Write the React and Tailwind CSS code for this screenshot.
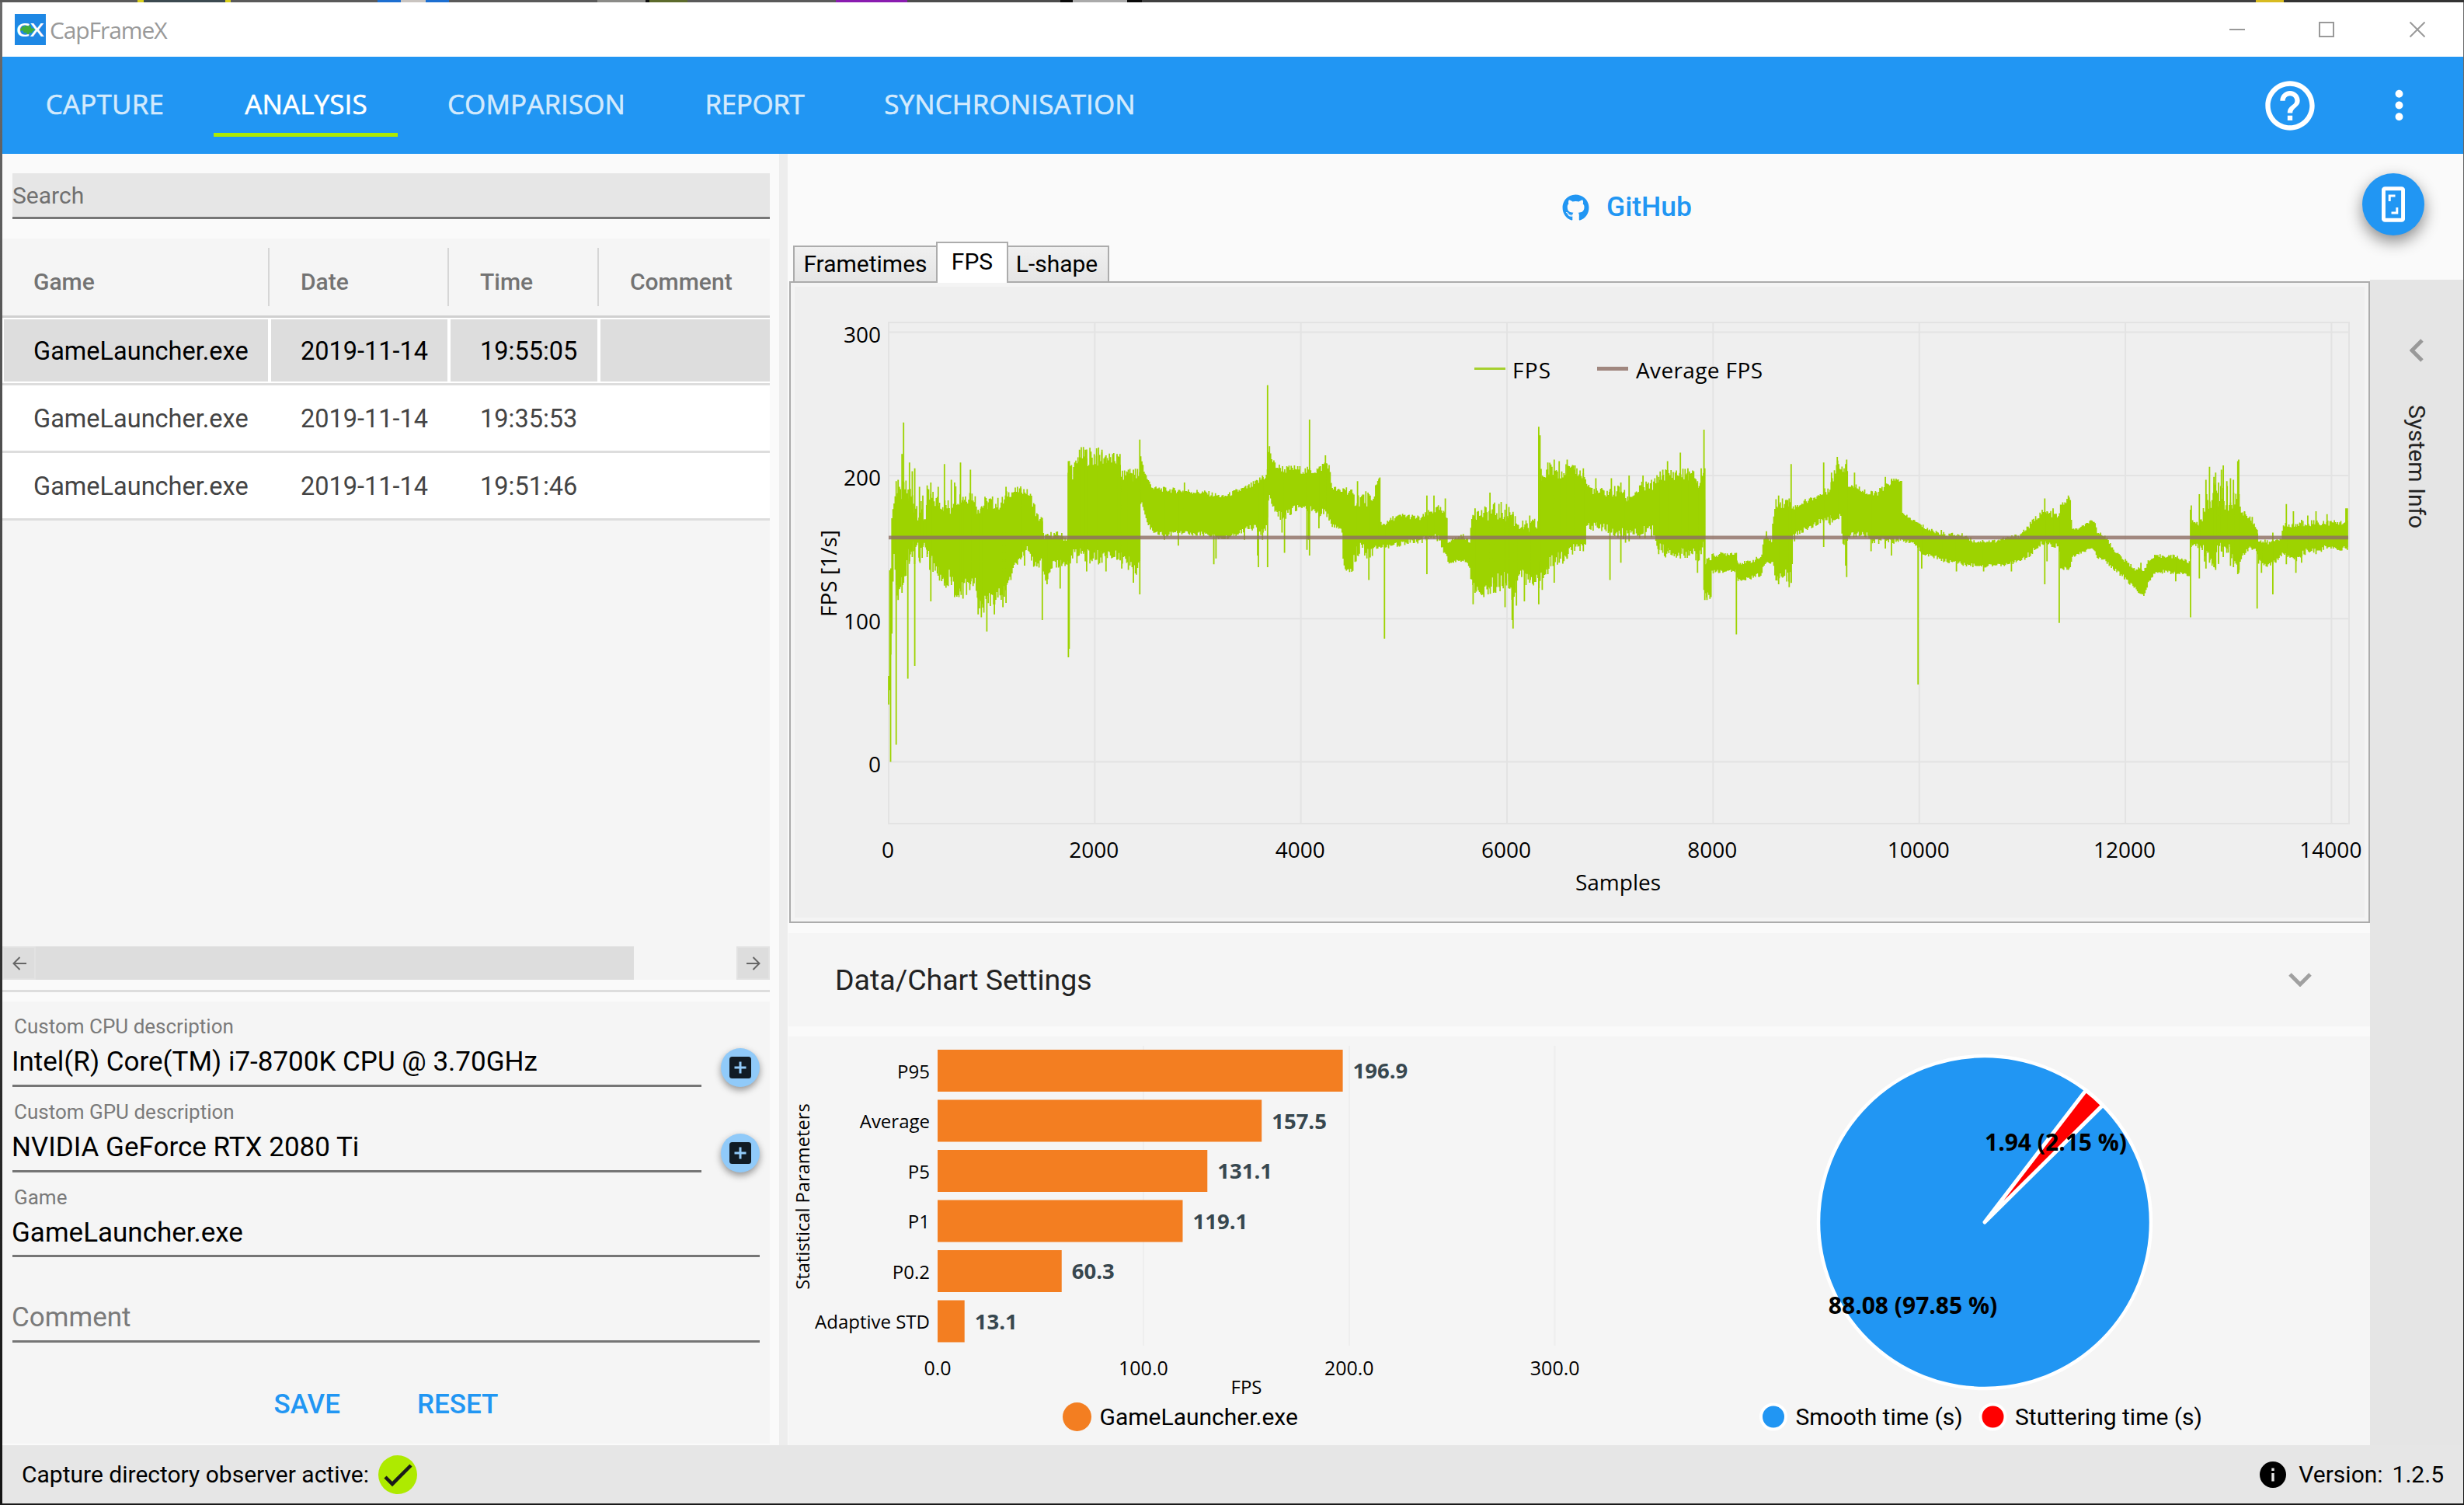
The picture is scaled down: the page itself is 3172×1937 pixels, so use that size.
import { FaGithub } from 'react-icons/fa'
import { MdHelpOutline, MdMoreVert } from 'react-icons/md'

const NAV = [
  { label: 'CAPTURE', box: 'w-[231px]', text: 'tracking-[0.2px]' },
  { label: 'ANALYSIS', box: 'w-[237px]', text: 'tracking-[0.1px]', active: true },
  { label: 'COMPARISON', box: 'w-[306px]', text: 'tracking-[0.1px]' },
  { label: 'REPORT', box: 'w-[206px]', text: 'tracking-[-0.4px]' },
  { label: 'SYNCHRONISATION', box: 'w-[401px]', text: 'tracking-[0.1px]' },
]

const RECORDS = [
  { game: 'GameLauncher.exe', date: '2019-11-14', time: '19:55:05', selected: true },
  { game: 'GameLauncher.exe', date: '2019-11-14', time: '19:35:53' },
  { game: 'GameLauncher.exe', date: '2019-11-14', time: '19:51:46' },
]

const STATS = [
  ['P95', 196.9],
  ['Average', 157.5],
  ['P5', 131.1],
  ['P1', 119.1],
  ['P0.2', 60.3],
  ['Adaptive STD', 13.1],
]

// what shows of the desktop above the window: [width, colour]
const DESKTOP = [
  [177, '#5a5a5a'], [8, '#d9cf1c'], [105, '#3c4a50'], [7, '#d9cf1c'], [189, '#5a5a5a'],
  [30, '#1d6fd1'], [32, '#c9c4c0'], [30, '#1d6fd1'], [191, '#5a5a5a'], [62, '#8b8b88'], [5, '#111'],
  [49, '#5d6b2c'], [191, '#5a5a5a'], [92, '#8a1bb0'], [197, '#4d4d4d'], [16, '#0a0a0a'],
  [70, '#aaa'], [19, '#0a0a0a'], [1434, '#404040'], [36, '#d8bb20'], [232, '#333'],
]

// envelope of the frame rate: [sample, high, low, noise]
const BAND = [
  [0, 60, 40, 0], [6, 130, 38, 4], [28, 140, 92, 4], [32, 174, 92, 6], [50, 180, 150, 8],
  [80, 190, 115, 10], [110, 185, 125, 14], [150, 192, 130, 12], [200, 186, 145, 22],
  [260, 180, 145, 18], [300, 176, 146, 18], [350, 170, 152, 12], [380, 184, 142, 16],
  [460, 182, 134, 12], [520, 180, 125, 10], [600, 177, 128, 14], [640, 188, 122, 16],
  [720, 184, 121, 14], [780, 187, 124, 12], [840, 184, 126, 6], [856, 176, 114, 7],
  [910, 179, 109, 12], [960, 181, 112, 12], [1060, 180, 116, 10], [1120, 182, 119, 9],
  [1150, 187, 124, 6], [1230, 189, 137, 6], [1290, 190, 144, 5], [1350, 188, 150, 5],
  [1400, 182, 140, 9], [1440, 171, 136, 7], [1492, 169, 142, 5], [1498, 158, 132, 5],
  [1540, 157, 126, 5], [1590, 159, 138, 5], [1650, 158, 138, 6], [1738, 156, 138, 6],
  [1744, 209, 142, 8], [1800, 202, 146, 16], [1850, 214, 145, 12], [2000, 213, 143, 16],
  [2120, 212, 144, 10], [2240, 210, 143, 10], [2262, 199, 142, 8], [2330, 203, 142, 8],
  [2438, 198, 136, 18], [2446, 214, 182, 4], [2480, 203, 175, 4], [2520, 196, 166, 4],
  [2570, 191, 160, 3], [2700, 190, 159, 4], [2900, 189, 160, 4], [3060, 188, 159, 4],
  [3250, 185, 156, 3], [3380, 189, 159, 4], [3460, 191, 163, 4], [3560, 194, 164, 6],
  [3640, 199, 160, 6], [3672, 200, 168, 4], [3690, 222, 187, 2], [3722, 210, 180, 4],
  [3770, 206, 172, 6], [3850, 204, 172, 6], [3940, 205, 177, 5], [4050, 203, 178, 6],
  [4180, 204, 172, 7], [4240, 209, 176, 6], [4275, 206, 169, 4], [4300, 192, 165, 4],
  [4400, 188, 161, 4], [4408, 192, 140, 6], [4480, 188, 131, 7], [4520, 183, 141, 10],
  [4600, 184, 154, 12], [4650, 184, 144, 12], [4690, 179, 147, 8], [4725, 192, 149, 6],
  [4768, 198, 152, 4], [4778, 166, 151, 3], [4820, 166, 150, 2], [4890, 170, 151, 4],
  [5000, 172, 153, 4], [5160, 170, 154, 4], [5250, 174, 158, 5], [5340, 177, 156, 5],
  [5422, 170, 142, 6], [5428, 154, 139, 3], [5580, 158, 141, 3], [5645, 152, 136, 3],
  [5652, 174, 124, 10], [5740, 173, 118, 8], [5900, 175, 125, 14], [6000, 174, 126, 14],
  [6060, 171, 116, 16], [6110, 166, 132, 8], [6200, 163, 128, 11], [6300, 166, 128, 12],
  [6306, 212, 122, 4], [6336, 198, 132, 12], [6400, 204, 139, 12], [6530, 203, 142, 11],
  [6600, 204, 147, 8], [6680, 203, 150, 7], [6760, 199, 150, 6], [6768, 194, 165, 3],
  [6860, 188, 164, 7], [7000, 188, 163, 8], [7120, 190, 159, 10], [7160, 183, 160, 4],
  [7300, 191, 160, 9], [7440, 194, 161, 9], [7458, 198, 150, 8], [7540, 201, 147, 9],
  [7700, 201, 146, 9], [7820, 200, 146, 8], [7860, 192, 142, 10], [7914, 205, 152, 6],
  [7922, 140, 116, 6], [7984, 143, 116, 6], [7990, 144, 133, 3], [8080, 145, 133, 3],
  [8220, 146, 134, 3], [8236, 139, 127, 2], [8330, 139, 128, 3], [8470, 143, 131, 3],
  [8486, 153, 137, 3], [8517, 158, 139, 3], [8570, 154, 140, 3], [8580, 168, 138, 4],
  [8612, 181, 129, 7], [8690, 181, 131, 9], [8764, 181, 128, 9], [8772, 177, 158, 3],
  [8900, 182, 163, 4], [9060, 187, 169, 4], [9110, 190, 168, 7], [9170, 198, 171, 9],
  [9205, 210, 171, 4], [9236, 206, 172, 7], [9250, 206, 158, 9], [9300, 206, 152, 10],
  [9314, 193, 158, 4], [9440, 191, 159, 5], [9500, 187, 158, 4], [9560, 187, 153, 5],
  [9640, 190, 154, 5], [9730, 196, 154, 5], [9828, 197, 156, 3], [9834, 173, 155, 3],
  [9960, 168, 152, 2], [10020, 165, 146, 3], [10100, 162, 144, 3], [10230, 159, 141, 3],
  [10450, 158, 138, 3], [10530, 154, 137, 3], [10720, 154, 137, 3], [10830, 156, 138, 3],
  [10970, 158, 140, 3], [11070, 165, 145, 4], [11180, 174, 152, 5], [11300, 173, 151, 5],
  [11360, 171, 151, 3], [11366, 179, 134, 3], [11470, 184, 136, 3], [11480, 162, 143, 2],
  [11560, 163, 146, 2], [11660, 168, 149, 2], [11710, 166, 146, 3], [11730, 160, 143, 2],
  [11800, 158, 141, 2], [11880, 149, 135, 3], [11970, 142, 130, 3], [12090, 135, 122, 3],
  [12184, 134, 115, 2], [12215, 139, 124, 3], [12280, 143, 131, 3], [12390, 144, 133, 3],
  [12500, 143, 132, 3], [12626, 139, 130, 2], [12636, 168, 152, 4], [12740, 167, 151, 6],
  [12780, 180, 142, 14], [12870, 188, 142, 16], [12960, 184, 147, 20], [13050, 182, 144, 16],
  [13105, 188, 136, 8], [13116, 175, 142, 3], [13200, 171, 149, 4], [13280, 163, 148, 3],
  [13288, 154, 140, 3], [13400, 153, 137, 4], [13520, 157, 144, 3], [13530, 164, 147, 5],
  [13600, 165, 144, 5], [13680, 165, 142, 6], [13760, 167, 147, 5], [13900, 167, 149, 5],
  [14100, 167, 149, 3], [14163, 168, 149, 3],
]

// single frames that leave the band: [sample, high, low]
const SPIKES = [
  [19, 130, 0], [73, 196, 12], [92, 197, 113], [130, 215, 118], [145, 237, 125], [186, 184, 58],
  [202, 209, 140], [229, 203, 143], [253, 205, 67], [299, 192, 140], [332, 186, 150], [374, 193, 143],
  [409, 195, 112], [481, 192, 130], [541, 208, 123], [608, 197, 126], [640, 195, 115], [697, 209, 119],
  [721, 185, 114], [794, 204, 124], [868, 176, 103], [899, 178, 101], [953, 182, 91], [1026, 177, 103],
  [1109, 179, 108], [1139, 192, 111], [1284, 191, 144], [1319, 188, 137], [1491, 168, 99], [1537, 156, 124],
  [1664, 158, 121], [1744, 210, 73], [1752, 207, 79], [1852, 218, 146], [1908, 218, 140], [1921, 212, 133],
  [2018, 219, 141], [2070, 218, 139], [2109, 214, 133], [2216, 215, 141], [2245, 215, 141], [2262, 199, 135],
  [2326, 204, 134], [2375, 204, 125], [2437, 225, 117], [2676, 190, 155], [2811, 189, 151], [2870, 195, 160],
  [3155, 185, 138], [3176, 185, 142], [3453, 189, 155], [3580, 193, 144], [3588, 193, 136], [3628, 200, 155],
  [3677, 263, 136], [3817, 203, 160], [3841, 203, 146], [4059, 202, 148], [4075, 202, 155], [4084, 239, 144],
  [4175, 205, 163], [4238, 214, 176], [4550, 196, 144], [4660, 187, 127], [4760, 198, 152], [4811, 166, 86],
  [5223, 186, 131], [5291, 186, 156], [5401, 184, 146], [5671, 171, 110], [5690, 177, 118], [5835, 188, 121],
  [5870, 180, 118], [5981, 176, 108], [6019, 178, 126], [6050, 173, 99], [6059, 173, 93], [6092, 166, 109],
  [6169, 164, 112], [6221, 172, 125], [6308, 234, 110], [6320, 228, 140], [6342, 200, 120], [6396, 209, 131],
  [6458, 211, 125], [6506, 210, 139], [6584, 211, 142], [6660, 207, 152], [6741, 205, 147], [6862, 198, 165],
  [6999, 190, 127], [7013, 198, 160], [7105, 195, 139], [7150, 183, 153], [7185, 200, 154], [7320, 200, 160],
  [7472, 199, 145], [7512, 204, 146], [7558, 210, 147], [7682, 216, 142], [7755, 205, 144], [7849, 196, 132],
  [7884, 205, 145], [7911, 232, 120], [7920, 205, 113], [7940, 142, 113], [8226, 146, 89], [8517, 161, 139],
  [8636, 186, 124], [8738, 184, 122], [8757, 208, 125], [8790, 175, 154], [9073, 209, 150], [9149, 202, 170],
  [9205, 213, 171], [9296, 211, 129], [9286, 208, 137], [9372, 202, 160], [9533, 188, 147], [9671, 199, 149],
  [9730, 197, 144], [9989, 166, 54], [10024, 164, 135], [10215, 162, 142], [10361, 158, 133], [10625, 154, 133],
  [10895, 156, 133], [11218, 184, 124], [11240, 175, 140], [11299, 177, 150], [11358, 171, 97], [11447, 186, 134],
  [12151, 139, 118], [12489, 143, 126], [12633, 176, 101], [12640, 179, 150], [12718, 187, 128], [12782, 197, 135],
  [12817, 206, 139], [12860, 199, 136], [12876, 202, 134], [12905, 195, 139], [12932, 204, 147], [12950, 207, 143],
  [12985, 196, 146], [13020, 198, 150], [13049, 197, 136], [13091, 210, 131], [13100, 211, 132], [13156, 175, 147],
  [13231, 171, 148], [13279, 162, 107], [13321, 153, 132], [13431, 160, 117], [13562, 180, 138], [13631, 175, 144],
  [13655, 166, 132], [13710, 169, 139], [13770, 172, 149], [13850, 175, 145], [13957, 173, 149], [14140, 177, 149],
  [14154, 177, 148],
]

const px = (sample) => 126 + sample * 0.13267
const py = (fps) => 616.5 - fps * 1.843

function noise(i) {
  const v = Math.sin(i * 12.9898) * 43758.5453
  return v - Math.floor(v)
}

function bandPath() {
  let d = ''
  let k = 0
  for (let i = 0; i * 10.5 <= 14163; i++) {
    const s = i * 10.5
    while (k < BAND.length - 2 && BAND[k + 1][0] <= s) k++
    const [s0, h0, l0, n0] = BAND[k]
    const [s1, h1, l1, n1] = BAND[k + 1]
    const t = (s - s0) / (s1 - s0)
    const n = n0 + (n1 - n0) * t
    const hi = h0 + (h1 - h0) * t + n * (noise(i) - 0.5)
    const lo = l0 + (l1 - l0) * t - n * (noise(i + 5000) - 0.5)
    d += `M${px(s).toFixed(1)} ${py(hi).toFixed(1)}V${py(lo).toFixed(1)}`
  }
  return d
}

const spikePath = SPIKES.map(([s, hi, lo]) => `M${px(s).toFixed(1)} ${py(hi).toFixed(1)}V${py(lo).toFixed(1)}`).join('')

function TitleBar() {
  return (
    <div className="flex h-[70px] shrink-0 items-center bg-white pl-4">
      <svg className="size-10" viewBox="0 0 40 40">
        <rect width="40" height="40" fill="#1e88e5" />
        <path d="M7 20h3l1-4 2 8 2-10 2 12 2-11 2 9 1-4h4" fill="none" stroke="#3fae3a" strokeWidth="3" />
        <text x="1.5" y="28.5" textLength="36" lengthAdjust="spacingAndGlyphs" className="fill-white font-['Open_Sans'] text-[24px] font-semibold">CX</text>
      </svg>
      <span className="ml-[5px] text-[30px] tracking-[-1.1px] text-[#999]">CapFrameX</span>
      <svg className="mr-[49px] ml-auto h-5 w-[252px]" viewBox="0 0 252 20" fill="none" stroke="#999" strokeWidth="2">
        <path d="M0 10h20M116 1h18v18h-18zM232.500 .5l19 19M251.500 .5l-19 19" />
      </svg>
    </div>
  )
}

function NavBar() {
  return (
    <nav className="flex h-[125px] shrink-0 bg-[#2196f3] pl-4">
      <div className="flex gap-[25px] pt-[23px]">
        {NAV.map((item) => (
          <div
            key={item.label}
            className={`flex h-20 items-center justify-center pt-[2px] pl-px text-[35px] [-webkit-text-stroke:0.6px_currentColor] ${item.box} ${item.text} ${item.active ? 'border-b-[5px] border-[#aeea00] text-white' : 'border-b-[5px] border-transparent text-[#d3eafd]'}`}
          >
            {item.label}
          </div>
        ))}
      </div>
      <div className="ml-auto flex items-center gap-[73px] pr-[53px] text-white">
        <MdHelpOutline className="size-[76px]" />
        <MdMoreVert className="size-[59px]" />
      </div>
    </nav>
  )
}

function RecordTable() {
  const cols = 'grid grid-cols-[344px_231px_193px_1fr]'
  return (
    <div className="flex h-[911px] flex-col bg-[#f5f5f5]">
      <div className={`${cols} h-[102px] border-b-[3px] border-[#d0d0d0] py-3 text-[30px] font-medium text-[#737373]`}>
        {['Game', 'Date', 'Time'].map((h) => (
          <div key={h} className="flex items-center border-r-2 border-[#d6d6d6] pt-3 pl-10">{h}</div>
        ))}
        <div className="flex items-center pt-3 pl-10">Comment</div>
      </div>
      {RECORDS.map((r) => (
        <div
          key={r.time}
          className={`${cols} h-[87px] border-b-[3px] border-[#ddd] bg-white text-[32.500px] ${r.selected ? 'pt-[2px] pb-[2px] text-black' : 'text-[#444]'}`}
        >
          {[r.game, r.date, r.time, ''].map((cell, i) => (
            <div key={i} className={`flex items-center border-white pt-[2px] pl-[38px] ${i < 3 ? 'border-x-2' : 'border-l-2'} ${r.selected ? 'bg-[#ddd]' : ''}`}>
              {cell}
            </div>
          ))}
        </div>
      ))}
    </div>
  )
}

function ScrollBar() {
  return (
    <div className="flex h-[43px] justify-between bg-[#f5f5f5]">
      <div className="flex w-[813px] bg-[#ddd]">
        <div className="flex w-[43px] items-center justify-center border-2 border-[#e2e2e2]">
          <ArrowIcon />
        </div>
      </div>
      <div className="flex w-[43px] items-center justify-center border-2 border-[#e2e2e2] bg-[#ddd]">
        <ArrowIcon className="rotate-180" />
      </div>
    </div>
  )
}

function ArrowIcon({ className = '' }) {
  return (
    <svg className={`h-[18px] w-[18px] ${className}`} viewBox="0 0 18 18" fill="none" stroke="#666" strokeWidth="2">
      <path d="M18 9H1.500M9.500 1L1.500 9l8 8" />
    </svg>
  )
}

function Field({ label, value, placeholder, add }) {
  return (
    <div className="flex h-[109.750px]">
      <div className={`border-b-[3px] border-[#757575] pt-[17px] ${add ? 'w-[887px]' : 'w-[962px]'}`}>
        <div className="h-[30px] pl-[2px] text-[26px] leading-[30px] text-[#7a7a7a]">{label}</div>
        <div className={`mt-[11px] -ml-px text-[35px] leading-[40px] whitespace-nowrap ${value ? 'text-black' : 'text-[#7a7a7a]'}`}>
          {value || placeholder}
        </div>
      </div>
      {add && (
        <button className="mt-[60px] ml-[25px] flex size-[50px] items-center justify-center rounded-full bg-[#90caf9] shadow-[0_4px_10px_rgba(0,0,0,0.4)]">
          <svg className="size-7" viewBox="0 0 28 28">
            <rect width="28" height="28" rx="3.500" fill="#111c25" />
            <path d="M14 6.500v15M6.500 14h15" stroke="#90caf9" strokeWidth="3" />
          </svg>
        </button>
      )}
    </div>
  )
}

function LeftPanel() {
  return (
    <aside className="w-[1000px] shrink-0 bg-[#fafafa] pr-3">
      <div className="mt-[25px] mb-[25px] ml-[13px] flex h-[59px] items-center border-b-[3px] border-[#767676] bg-[#e6e6e6] text-[30px] text-[#707070]">
        Search
      </div>
      <RecordTable />
      <ScrollBar />
      <div className="flex h-[28px] items-center"><div className="h-[3px] w-full bg-[#ddd]" /></div>
      <div className="h-[569px] bg-[#f5f5f5] pl-[13px]">
        <Field label="Custom CPU description" value="Intel(R) Core(TM) i7-8700K CPU @ 3.70GHz" add />
        <Field label="Custom GPU description" value="NVIDIA GeForce RTX 2080 Ti" add />
        <Field label="Game" value="GameLauncher.exe" />
        <Field placeholder="Comment" />
        <div className="mr-[13px] flex h-[161px] items-center justify-center gap-[99px] text-[35px] font-medium text-[#2196f3]">
          <span>SAVE</span>
          <span>RESET</span>
        </div>
      </div>
    </aside>
  )
}

function FpsChart() {
  return (
    <svg className="h-[812px] w-[2021px] bg-[#efefef] font-['Open_Sans'] text-[28px]" viewBox="5 5 2021 812">
      <g fill="none" stroke="#e3e3e3" strokeWidth="2">
        <rect x="126" y="51" width="1880" height="645" />
        {[0, 100, 200, 300].map((v) => <path key={v} d={`M126 ${py(v)}H2006`} />)}
        {[2000, 4000, 6000, 8000, 10000, 12000, 14000].map((v) => <path key={v} d={`M${px(v)} 51V696`} />)}
      </g>
      <path d={bandPath()} stroke="#9dd300" strokeWidth="1.700" />
      <path d={spikePath} stroke="#9dd300" strokeWidth="1.800" />
      <path d={`M${px(0)} 327.800H${px(14163)}`} stroke="#8d6e63" strokeOpacity="0.8" strokeWidth="4.800" />
      {[0, 100, 200, 300].map((v) => <text key={v} x="116" y={py(v) + 13.5} textAnchor="end">{v}</text>)}
      {[0, 2000, 4000, 6000, 8000, 10000, 12000, 14000].map((v) => (
        <text key={v} x={px(v) - 1} y="740" textAnchor="middle">{v}</text>
      ))}
      <text x="1065" y="782" textAnchor="middle">Samples</text>
      <text transform="translate(59 374) rotate(-90)" textAnchor="middle">FPS [1/s]</text>
      <path d="M880 110.500h40" stroke="#a6d02e" strokeWidth="3" />
      <text x="929" y="123" textLength="49">FPS</text>
      <path d="M1038 110.500h40" stroke="#a0877f" strokeWidth="5" />
      <text x="1088" y="123" textLength="163">Average FPS</text>
    </svg>
  )
}

function StatsChart() {
  const scale = 2.649
  return (
    <svg className="h-[526px] w-[1100px] font-['Open_Sans']" viewBox="0 0 1100 526">
      <path d="M457 12v386M722 12v386M986.500 12v386" stroke="#eee" strokeWidth="2" />
      {STATS.map(([name, value], i) => (
        <g key={name}>
          <rect x="192" y={17 + i * 64.5} width={value * scale} height="54" fill="#f37e21" />
          <text x="182" y={53.5 + i * 64.5} textAnchor="end" className="text-[24px]">{name}</text>
          <text x={205 + value * scale} y={54 + i * 64.5} className="fill-[#37474f] text-[27.500px] font-bold">{value}</text>
        </g>
      ))}
      {[0, 100, 200, 300].map((v) => (
        <text key={v} x={192 + v * scale} y="435.500" textAnchor="middle" className="text-[25px]">{v.toFixed(1)}</text>
      ))}
      <text x="589.500" y="459.500" textAnchor="middle" className="text-[24px]">FPS</text>
      <text transform="translate(27 206) rotate(-90)" textAnchor="middle" className="text-[23.700px]">Statistical Parameters</text>
      <circle cx="371.500" cy="489.500" r="18.500" fill="#f37e21" />
      <text x="400.500" y="500" className="font-[Roboto] text-[30px]">GameLauncher.exe</text>
    </svg>
  )
}

function TimePie() {
  return (
    <svg className="h-[526px] w-[936px]" viewBox="0 0 936 526" strokeLinejoin="round">
      <circle cx="440" cy="239" r="214" fill="#2196f3" stroke="#fff" strokeWidth="4.500" />
      <path d="M440 239L570.300 69.200A214 214 0 0 1 592 88.400Z" fill="#f00" stroke="#fff" strokeWidth="5" />
      <g className="font-['Open_Sans'] text-[30px] font-bold" textAnchor="middle">
        <text x="531.500" y="146.500">1.94 (2.15 %)</text>
        <text x="347.500" y="356.500">88.08 (97.85 %)</text>
      </g>
      <g stroke="#fff" strokeWidth="4">
        <circle cx="168" cy="489.500" r="16" fill="#2196f3" />
        <circle cx="450.500" cy="489.500" r="16" fill="#f00" />
      </g>
      <g className="font-[Roboto] text-[30px]">
        <text x="196.500" y="500">Smooth time (s)</text>
        <text x="479" y="500">Stuttering time (s)</text>
      </g>
    </svg>
  )
}

function Tabs() {
  const idle = 'flex h-[46px] items-center justify-center border-2 border-b-0 border-[#acacac] bg-linear-to-b from-[#f0f0f0] to-[#e5e5e5]'
  return (
    <div className="flex h-[51px] items-end pl-[7px] text-[30px] text-black">
      <div className={`${idle} w-[184px] border-r-0 pb-[2px]`}>Frametimes</div>
      <div className="relative z-10 -mb-[2px] flex h-[53px] w-[93px] items-center justify-center border-2 border-b-0 border-[#acacac] bg-white pb-1">FPS</div>
      <div className={`${idle} w-[130px] border-l-0 pr-[3px] pb-[2px]`}>L-shape</div>
    </div>
  )
}

function MainPanel() {
  return (
    <main className="flex w-[2037px] flex-col">
      <div className="flex h-[113px] items-center pt-[25px] pl-[997px] text-[35.500px] font-medium text-[#2196f3]">
        <FaGithub className="mr-[22px] size-[35px]" />
        GitHub
      </div>
      <Tabs />
      <div className="ml-[2px] h-[826px] border-2 border-[#acacac] bg-[#f4f4f4] p-[5px]">
        <FpsChart />
      </div>
      <div className="mt-[13px] ml-px flex h-[120px] items-center justify-between bg-[#f5f5f5] pr-[75px] pl-[60px] text-[37.500px] text-[#222]">
        Data/Chart Settings
        <svg className="h-[18px] w-[30px]" viewBox="0 0 30 18" fill="none" stroke="#a0a0a0" strokeWidth="5">
          <path d="M2 2l13 13L28 2" />
        </svg>
      </div>
      <div className="mt-[13px] ml-px flex flex-1 bg-[#f5f5f5]">
        <StatsChart />
        <TimePie />
      </div>
    </main>
  )
}

function SystemInfo() {
  return (
    <aside className="relative flex flex-1 flex-col pt-[162px]">
      <button className="absolute top-[25px] -left-[10px] flex size-20 items-center justify-center rounded-full bg-[#2196f3] shadow-[0_8px_20px_rgba(0,0,0,0.45)]">
        <svg className="h-[46px] w-[30px]" viewBox="0 0 30 46" fill="none" stroke="#fff">
          <rect x="2.400" y="2.700" width="25.200" height="40.600" rx="2" strokeWidth="5" />
          <path d="M10.200 19v-7H17.500M19.800 27v7H12.500" strokeWidth="3" />
        </svg>
      </button>
      <div className="flex flex-1 flex-col items-center bg-[#e5e5e5] pt-[76px]">
        <svg className="h-[30px] w-[18px]" viewBox="0 0 18 30" fill="none" stroke="#999" strokeWidth="5">
          <path d="M16 2L3 15l13 13" />
        </svg>
        <span className="mt-[55px] text-[30px] text-[#222] [writing-mode:vertical-rl]">System Info</span>
      </div>
    </aside>
  )
}

function StatusBar() {
  return (
    <footer className="flex h-[75px] shrink-0 items-center bg-[#e6e6e6] pr-[25px] pl-[25px] text-[30px] text-black">
      Capture directory observer active:
      <svg className="ml-3 size-[50px]" viewBox="0 0 50 50">
        <circle cx="25" cy="25" r="25" fill="#aeea00" />
        <path d="M9 28l9 9 24-24" fill="none" stroke="#1a1a1a" strokeWidth="4.500" />
      </svg>
      <svg className="mr-4 ml-auto size-[34px]" viewBox="0 0 34 34">
        <circle cx="17" cy="17" r="17" />
        <path d="M17 8.500v3.500M17 15v10.500" stroke="#e6e6e6" strokeWidth="3.400" />
      </svg>
      <span>Version:</span>
      <span className="ml-3">1.2.5</span>
    </footer>
  )
}

export default function App() {
  return (
    <div className="flex h-[1937px] w-[3172px] flex-col overflow-hidden bg-[#1a1a1a] font-[Roboto,sans-serif]">
      <div className="flex h-[3px] shrink-0">
        {DESKTOP.map(([w, color], i) => <div key={i} className="h-full shrink-0" style={{ width: w, background: color }} />)}
      </div>
      <div className="flex h-[1932px] flex-col bg-linear-to-b from-[#6b6b6b] to-[#141414] pr-px pl-[3px]">
        <div className="font-['Open_Sans']">
          <TitleBar />
          <NavBar />
        </div>
        <div className="flex h-[1662px] bg-[#fafafa]">
          <LeftPanel />
          <div className="w-[11px] shrink-0 bg-[#ededed]" />
          <MainPanel />
          <SystemInfo />
        </div>
        <StatusBar />
      </div>
    </div>
  )
}
